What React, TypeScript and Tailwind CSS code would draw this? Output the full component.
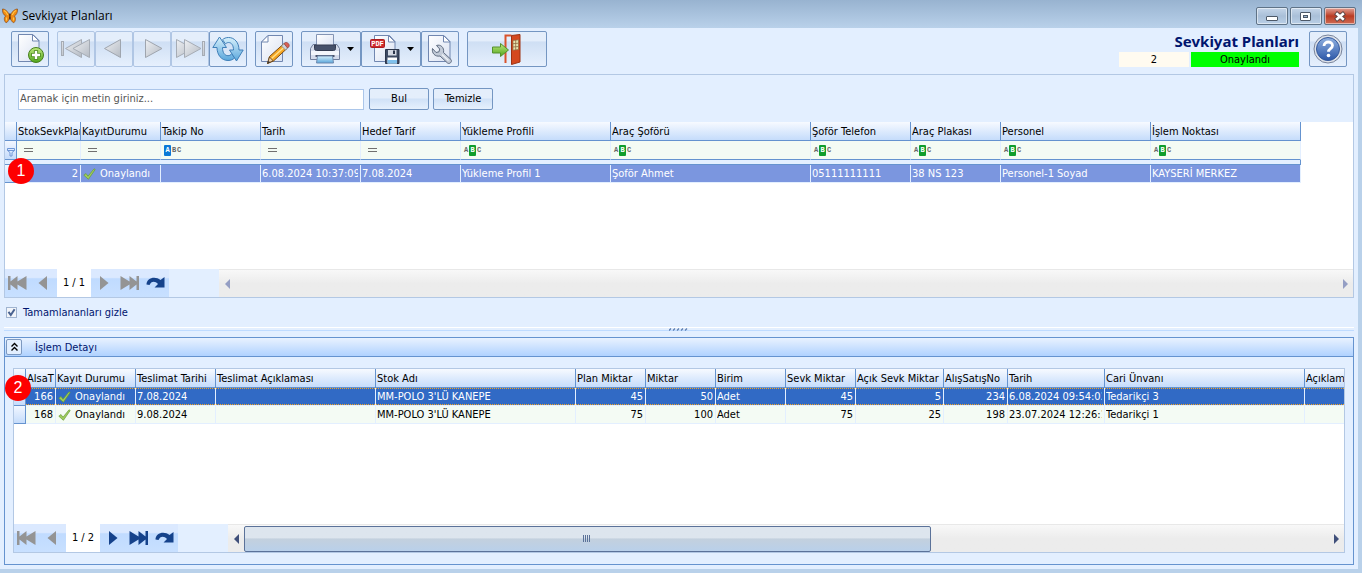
import type { ReactNode } from "react";

type Column = { title: string; width: string; filter?: "eq" | "starts" | "contains"; align?: "right" };

const planColumns: Column[] = [
  { title: "StokSevkPlanID", width: "w-16", filter: "eq", align: "right" },
  { title: "KayıtDurumu", width: "w-20", filter: "eq" },
  { title: "Takip No", width: "w-[100px]", filter: "starts" },
  { title: "Tarih", width: "w-[100px]", filter: "eq" },
  { title: "Hedef Tarif", width: "w-[100px]", filter: "eq" },
  { title: "Yükleme Profili", width: "w-[150px]", filter: "contains" },
  { title: "Araç Şoförü", width: "w-[200px]", filter: "contains" },
  { title: "Şoför Telefon", width: "w-[100px]", filter: "contains" },
  { title: "Araç Plakası", width: "w-[90px]", filter: "contains" },
  { title: "Personel", width: "w-[150px]", filter: "contains" },
  { title: "İşlem Noktası", width: "w-[150px]", filter: "contains" },
];

const planRow = [
  "2",
  "Onaylandı",
  "",
  "6.08.2024 10:37:09",
  "7.08.2024",
  "Yükleme Profil 1",
  "Şoför Ahmet",
  "05111111111",
  "38 NS 123",
  "Personel-1 Soyad",
  "KAYSERİ MERKEZ",
];

const detailColumns: Column[] = [
  { title: "AlsaT", width: "w-[30px]", align: "right" },
  { title: "Kayıt Durumu", width: "w-20" },
  { title: "Teslimat Tarihi", width: "w-20" },
  { title: "Teslimat Açıklaması", width: "w-40" },
  { title: "Stok Adı", width: "w-[200px]" },
  { title: "Plan Miktar", width: "w-[70px]", align: "right" },
  { title: "Miktar", width: "w-[70px]", align: "right" },
  { title: "Birim", width: "w-[70px]" },
  { title: "Sevk Miktar", width: "w-[70px]", align: "right" },
  { title: "Açık Sevk Miktar", width: "w-[88px]", align: "right" },
  { title: "AlışSatışNo", width: "w-16", align: "right" },
  { title: "Tarih", width: "w-[97px]" },
  { title: "Cari Ünvanı", width: "w-[200px]" },
  { title: "Açıklama", width: "w-[100px]" },
];

const detailRows = [
  ["166", "Onaylandı", "7.08.2024", "", "MM-POLO 3'LÜ KANEPE", "45", "50", "Adet", "45", "5", "234", "6.08.2024 09:54:02", "Tedarikçi 3", ""],
  ["168", "Onaylandı", "9.08.2024", "", "MM-POLO 3'LÜ KANEPE", "75", "100", "Adet", "75", "25", "198", "23.07.2024 12:26:10", "Tedarikçi 1", ""],
];

export default function App() {
  return (
    <div className="relative flex min-h-screen flex-col bg-[#b9d1ea] pr-1 pb-1 font-['DejaVu_Sans_Condensed','Noto_Sans',sans-serif] text-[11px] leading-4 text-black">
      <TitleBar />

      <div className="flex flex-1 flex-col bg-[#e3efff] pr-1 pb-1 pl-1">
        <Toolbar />

        {/* Plans */}
        <section className="flex flex-col border border-[#b3c8e4]">
          <form className="flex items-center gap-1 pt-[13px] pb-3 pl-[13px]" onSubmit={(e) => e.preventDefault()}>
            <input
              type="text"
              aria-label="Arama"
              placeholder="Aramak için metin giriniz..."
              className="mr-px h-[21px] w-[346px] border border-[#abc6ea] bg-white px-px pb-px placeholder:text-[#555]"
            />
            <TextButton>Bul</TextButton>
            <TextButton>Temizle</TextButton>
          </form>
          <div className="h-[147px] overflow-hidden bg-white">
            <PlanTable />
          </div>
          <Navigator position="1 / 1" />
        </section>

        <label className="flex h-[29px] items-center gap-1.5 pl-0.5 text-[#00156e]">
          <input
            type="checkbox"
            defaultChecked
            className="size-[11px] appearance-none border border-[#a0b4d0] bg-[#f2f5fa] bg-[url('data:image/svg+xml,%3Csvg%20xmlns=%22http://www.w3.org/2000/svg%22%20viewBox=%220%200%209%209%22%3E%3Cpath%20d=%22M1.5%203.8L3.8%207L7.6%201.2%22%20fill=%22none%22%20stroke=%22%234a6391%22%20stroke-width=%222%22/%3E%3C/svg%3E')]"
          />
          Tamamlananları gizle
        </label>

        {/* Splitter */}
        <div className="mb-1.5 flex h-1 justify-center border-t border-b border-t-white border-b-[#bfdbff]">
          <svg width="20" height="3" viewBox="0 0 20 3">
            {[0, 4, 8, 12, 16].map((x) => (
              <path key={x} d={`M${x} 2.5L${x + 2} 0.5`} stroke="#5b7cb0" strokeWidth="1.3" />
            ))}
          </svg>
        </div>

        {/* Plan details */}
        <section className="flex flex-1 flex-col border border-[#6593cf]">
          <header className="flex h-[19px] shrink-0 items-center gap-[13px] border-b border-[#6593cf] bg-linear-to-b from-[#e9f2ff] to-[#b0d2ff] pl-px text-[#00156e]">
            <button
              type="button"
              aria-label="Daralt"
              className="grid size-4 place-items-center rounded-xs border border-[#7d99c0] bg-[#e3efff]"
            >
              <svg width="9" height="10" viewBox="0 0 9 10" fill="none" stroke="#000" strokeWidth="1.4">
                <path d="M1.5 4.5L4.5 1.5L7.5 4.5M1.5 8.5L4.5 5.5L7.5 8.5" />
              </svg>
            </button>
            <h2 className="pt-px">İşlem Detayı</h2>
          </header>
          <div className="mx-2 mt-[11px] mb-[11px] flex flex-1 flex-col border border-[#b3c8e4] bg-white">
            <div className="grid flex-1 grid-cols-1 content-start overflow-hidden">
              <DetailTable />
            </div>
            <Navigator position="1 / 2" active />
          </div>
        </section>
      </div>

      {/* Step markers */}
      <Marker number={1} className="top-[158px] left-2" />
      <Marker number={2} className="top-[375px] left-[5px]" />
    </div>
  );
}

function Marker({ number, className }: { number: number; className: string }) {
  return (
    <span
      className={`absolute grid size-[26px] place-items-center rounded-full bg-[#fe0000] font-['Liberation_Sans',sans-serif] text-base leading-none text-white ${className}`}
    >
      {number}
    </span>
  );
}

function TitleBar() {
  return (
    <header className="-mr-1 flex h-7 items-center gap-1 bg-linear-to-b from-[#98b3d0] to-[#b9d1ea] pr-1.5 pl-0.5">
      <svg width="16" height="16" viewBox="0 0 16 16" className="mt-1">
        <path d="M7.5 7C6 3.5 3 .8.4 1c-.3 3 1 6 3.2 7C1.8 9 1.8 13 4 14.8 6 14.5 7 11.5 7.8 9 8.6 11.5 10 14.5 11.8 14.8 14 13 14 9.5 12.3 8c2.3-1 3.5-4 3.300-7C13 .8 10 3.5 8.3 7z" fill="#f08a14" stroke="#6a3309" strokeWidth=".5" />
        <path d="M2 2.5c1.5.5 3 2.5 3.8 4.5M14 2.5c-1.5.5-3 2.5-3.8 4.5M4.5 9.5v3M11.5 9.5v3" stroke="#ffc94a" strokeWidth="1.1" fill="none" />
        <path d="M7.9 5.5v6" stroke="#3d2008" strokeWidth="1.2" />
      </svg>
      <h1 className="mt-1 flex-1 font-['Open_Sans',sans-serif] text-xs">Sevkiyat Planları</h1>
      <div className="mt-1 flex gap-0.5">
        <WindowButton label="Simge durumuna küçült" className="from-[#c5d6e9] via-[#a9bfd8] to-[#b9cfe6]">
          <rect x="4.5" y="6.5" width="11" height="4" rx=".5" fill="#fff" stroke="#4d5968" />
        </WindowButton>
        <WindowButton label="Ekranı kapla" className="from-[#c5d6e9] via-[#a9bfd8] to-[#b9cfe6]">
          <rect x="4.5" y="2.5" width="10" height="8" rx=".5" fill="#fff" stroke="#4d5968" />
          <rect x="7.5" y="5.5" width="4" height="2" fill="#9db5cf" stroke="#4d5968" />
        </WindowButton>
        <WindowButton label="Kapat" className="from-[#e0a196] via-[#b93a22] to-[#cf6a52]">
          <path d="M5.5 2.8L14.5 10.2M14.5 2.8L5.5 10.2" stroke="#5b4444" strokeWidth="4.4" />
          <path d="M6.2 3.3L13.8 9.7M13.8 3.3L6.2 9.7" stroke="#fff" strokeWidth="2.6" />
        </WindowButton>
      </div>
    </header>
  );
}

function WindowButton({ label, className, children }: { label: string; className: string; children: ReactNode }) {
  return (
    <button
      type="button"
      aria-label={label}
      className={`grid h-[18px] w-8 place-items-center rounded-xs border border-[#5f7387] bg-linear-to-b inset-ring inset-ring-white/50 ${className}`}
    >
      <svg width="20" height="13" viewBox="0 0 20 13">
        {children}
      </svg>
    </button>
  );
}

function TextButton({ children }: { children: ReactNode }) {
  return (
    <button
      type="submit"
      className="h-[22px] w-[60px] rounded-xs border border-[#7496c2] bg-linear-to-b from-[#e4eefb] from-45% via-[#d0e1f7] via-50% to-[#e6f0fd]"
    >
      {children}
    </button>
  );
}

function ToolButton({
  label,
  wide,
  disabled,
  className = "w-[38px]",
  children,
}: {
  label: string;
  wide?: boolean;
  disabled?: boolean;
  className?: string;
  children: ReactNode;
}) {
  return (
    <button
      type="button"
      aria-label={label}
      disabled={disabled}
      className={`flex h-9 items-center justify-center rounded-xs border border-[#7496c2] bg-linear-to-b from-[#e4eefb] from-25% via-[#cfdff4] via-30% to-[#e6f0fd] disabled:border-[#b0c6e4] ${className}`}
    >
      <svg width="32" height="32" viewBox="0 0 32 32">
        {children}
      </svg>
      {wide && (
        <svg width="7" height="4" viewBox="0 0 7 4" className="ml-1.5">
          <path d="M0 0h7L3.5 4z" />
        </svg>
      )}
    </button>
  );
}

function Toolbar() {
  return (
    <div className="flex h-[46px] items-start gap-2 pt-[3px] pl-[7px]">
      {/* Gradients shared by the icons */}
      <svg width="0" height="0" className="absolute">
        <defs>
          <linearGradient id="paper" x1="0" y1="0" x2="1" y2="1">
            <stop offset="0" stopColor="#fff" />
            <stop offset="1" stopColor="#d9e1f2" />
          </linearGradient>
          <linearGradient id="silver" x1="0" y1="0" x2="1" y2="1">
            <stop offset="0" stopColor="#eef0f3" />
            <stop offset="1" stopColor="#b4bac3" />
          </linearGradient>
          <linearGradient id="sky" x1="0" y1="0" x2="0" y2="1">
            <stop offset="0" stopColor="#d7f0fb" />
            <stop offset="1" stopColor="#5aa7dc" />
          </linearGradient>
          <linearGradient id="leaf" x1="0" y1="0" x2="0" y2="1">
            <stop offset="0" stopColor="#bfe87d" />
            <stop offset="1" stopColor="#4fa51b" />
          </linearGradient>
          <linearGradient id="ball" x1="0" y1="0" x2="0" y2="1">
            <stop offset="0" stopColor="#8fb0e0" />
            <stop offset="1" stopColor="#2c57a8" />
          </linearGradient>
        </defs>
      </svg>

      <ToolButton label="Yeni">
        <path d="M4.5 1.5h14.5l6 6V28.5H4.5z" fill="url(#paper)" stroke="#7187b0" />
        <path d="M18.5 1.5v6.5h6.5z" fill="#fff" stroke="#7187b0" />
        <circle cx="22" cy="22" r="7.5" fill="url(#leaf)" stroke="#47801c" />
        <path d="M22 17.2v9.6M17.2 22h9.6" stroke="#4d8a1f" strokeWidth="4.2" />
        <path d="M22 18v8M18 22h8" stroke="#fff" strokeWidth="2.4" />
      </ToolButton>

      <div className="flex">
        <ToolButton label="İlk" disabled>
          <g fill="url(#silver)" stroke="#a6acb5">
            <rect x="1.5" y="8.5" width="2" height="14" />
            <path d="M21.5 6.5v18L5.5 15.5z" />
            <path d="M29.5 6.5v18L13 15.5z" />
          </g>
        </ToolButton>
        <ToolButton label="Önceki" disabled>
          <path d="M22.5 6.5v18L6.5 15.5z" fill="url(#silver)" stroke="#9fa5ae" />
        </ToolButton>
        <ToolButton label="Sonraki" disabled>
          <path d="M9.5 6.5v18L26 15.5z" fill="url(#silver)" stroke="#9fa5ae" />
        </ToolButton>
        <ToolButton label="Son" disabled>
          <g fill="url(#silver)" stroke="#a6acb5">
            <path d="M2.5 6.5v18L19 15.5z" />
            <path d="M10.5 6.5v18L27 15.5z" />
            <rect x="28.5" y="8.5" width="2" height="14" />
          </g>
        </ToolButton>
        <ToolButton label="Yenile">
          <g fill="url(#sky)" stroke="#3f7fb8" strokeLinejoin="round">
            <path d="M7.5 4L.8 14.5H5C5 22 9.5 27.5 16 27.5c3 0 5-1 6.8-2.8l-3-4C18.8 22 17.5 22.7 16 22.7c-3.2 0-5.5-3-5.5-8.2h4z" />
            <path d="M24.5 28L31.2 17H27C27 9.5 22.5 4.5 16.5 4.5c-2.5 0-4.5.8-6 2.2l3 4.3c1-1 1.8-1.5 3-1.5 3 0 5 2.8 5 7.5h-4z" />
          </g>
        </ToolButton>
      </div>

      <ToolButton label="Düzenle">
        <path d="M10 2.500h14.500V28.5H3.5V9z" fill="url(#paper)" stroke="#7187b0" />
        <path d="M10 2.5V9H3.5z" fill="#fff" stroke="#7187b0" />
        <path d="M9.5 30.5l2-7L25.5 11l4 4L15.5 28z" fill="#f6a623" stroke="#7a4a12" />
        <path d="M13.5 25.5L27.5 13" stroke="#ffe08a" strokeWidth="1.5" />
        <path d="M23.5 13l2.5-2.5 4 4-2.5 2.5z" fill="#cdd2da" stroke="#7c7f88" strokeWidth=".7" />
        <path d="M26 10.5l1.5-1c2-.5 4.5 2 3.5 4l-1.5 1.5z" fill="#d96055" stroke="#8d3d35" strokeWidth=".7" />
        <path d="M9.5 30.5l2-6.5 3.5 3.7z" fill="#f1d0a4" stroke="#4b3015" strokeWidth=".7" />
        <path d="M9.5 30.5l1-2.8 1.7 1.5z" fill="#333" />
      </ToolButton>

      <div className="flex">
        <ToolButton label="Yazdır" wide className="w-[60px]">
          <path d="M7.5 1.5h17V14h-17z" fill="url(#paper)" stroke="#8394b4" />
          <path d="M4 11.5h3v3h18v-3h3l2.5 4V26.5H1.5V15.5z" fill="#d5dceb" stroke="#717f9c" />
          <path d="M5.5 12h21v3.5c0 1.5-1 2-2 2h-17c-1 0-2-.5-2-2z" fill="#46516a" stroke="#343d52" />
          <path d="M2 18h28v4H2z" fill="#f3f6fb" />
          <path d="M6.5 22h19v2h-19z" fill="#4c556b" />
          <path d="M8.5 23h15l1 7h-17z" fill="url(#sky)" stroke="#6e89ae" />
        </ToolButton>
        <ToolButton label="PDF kaydet" wide className="w-[60px]">
          <path d="M5.5 2.5h15l5.5 6V28.5H5.5z" fill="url(#paper)" stroke="#7187b0" />
          <path d="M19.5 2.5v6.5H26z" fill="#fff" stroke="#7187b0" />
          <rect x="1.5" y="6.5" width="14" height="8" rx="1" fill="#cf2a2c" stroke="#a91d20" />
          <text x="8.5" y="13.2" textAnchor="middle" fill="#fff" fontSize="7" fontWeight="700" fontFamily="Liberation Mono, monospace">
            PDF
          </text>
          <path d="M16.5 16.5h13.500V30.5H16.5z" fill="#3d4961" stroke="#2b354a" />
          <path d="M19 17h8.500v5.500H19z" fill="#d3d8e2" />
          <path d="M24 17.5h2v3.500h-2z" fill="#2b354a" />
          <path d="M18.5 24.5h9.500v6h-9.500z" fill="#fff" />
          <path d="M18.5 27h9.500v3.500h-9.500z" fill="#7fc0ec" />
        </ToolButton>
        <ToolButton label="Ayarlar">
          <path d="M4.5 2.5h15.500l6 6V28.5H4.5z" fill="url(#paper)" stroke="#7187b0" />
          <path d="M19.5 2.5v6.500h6.500z" fill="#fff" stroke="#7187b0" />
          <path d="M8.5 15.5c-1 4.500 2.500 8.500 7.500 7.500l7.500 7c2 1.500 5-1 3.500-3.500l-7.500-7C20.5 14.500 16.5 11 12.5 12.500l3.200 3.500-.7 2.800-3 .7z" fill="#c3cbd8" stroke="#5f6b80" />
          <path d="M18 21.5l6.500 6" stroke="#eef1f6" strokeWidth="1.3" />
        </ToolButton>
      </div>

      <ToolButton label="Çıkış" className="w-20">
        <path d="M14.5 30V2.5h6" fill="none" stroke="#d9532c" strokeWidth="2" />
        <path d="M20.5 2.5l8.5-1v27.5l-8.5 2.5z" fill="#d4481f" stroke="#9e3212" />
        <path d="M22 7.5l5.5-.7v9.7l-5.5.7z" fill="#e8e4b0" stroke="#8f6a42" strokeWidth=".7" />
        <path d="M24.7 7v10M22 10.7l5.5-.5M22 14l5.5-.5" stroke="#8f6a42" strokeWidth=".8" />
        <path d="M1.5 14h8V10.5l8 6.5-8 6.5V20h-8z" fill="url(#leaf)" stroke="#54902c" />
      </ToolButton>

      <div className="ml-auto flex flex-col items-end">
        <strong className="font-['Noto_Sans',sans-serif] text-[15px] leading-[21px] font-bold text-[#00156e]">
          Sevkiyat Planları
        </strong>
        <div className="flex gap-0.5 text-center leading-[15px]">
          <output className="w-[70px] bg-[#fffbf0]">2</output>
          <output className="w-[108px] bg-[#00ff00]">Onaylandı</output>
        </div>
      </div>
      <ToolButton label="Yardım" className="mr-[7px] ml-0.5 w-[38px]">
        <circle cx="16" cy="16" r="14" fill="#dfe3ea" stroke="#77839b" />
        <circle cx="16" cy="16" r="11.5" fill="url(#ball)" stroke="#355a9c" />
        <path d="M12 13c0-5.5 8.5-5 8.5-.5 0 3-4 3.2-4 6.2" fill="none" stroke="#fff" strokeWidth="2.8" />
        <circle cx="16.5" cy="22.5" r="1.8" fill="#fff" />
      </ToolButton>
    </div>
  );
}

function Check() {
  return (
    <svg width="13" height="12" viewBox="0 0 13 12" className="mr-1 ml-px shrink-0">
      <path d="M.8 7.2L3 5.5l2 2.7L11 .8l1.2.7L5.4 11.3z" fill="#9fce5b" stroke="#679b35" strokeWidth=".7" />
    </svg>
  );
}

function FilterMark({ kind }: { kind: Column["filter"] }) {
  if (kind === "eq") {
    return (
      <svg width="9" height="4" viewBox="0 0 9 4" className="ml-[5px]">
        <path d="M0 .5h9M0 3.5h9" stroke="#707070" />
      </svg>
    );
  }
  const starts = kind === "starts";
  return (
    <span className="ml-px flex font-['Liberation_Mono',monospace] text-[7px] leading-[11px] font-bold text-[#666]">
      <span className={starts ? "w-[7px] rounded-[1px] bg-[#0a78d7] text-center text-white" : "w-[5px]"}>A</span>
      <span className={starts ? "ml-px w-1" : "w-[7px] rounded-[1px] bg-[#0f9d2c] text-center text-white"}>B</span>
      <span className="ml-px w-1">C</span>
    </span>
  );
}

const headCell =
  "h-[19px] overflow-hidden border-r border-b border-[#6593cf] bg-linear-to-b from-[#f7faff] to-[#c5dcfb] p-0 pt-0.5 pl-px text-left font-normal whitespace-nowrap";
const indicatorCell = "border-r border-b border-[#6593cf] bg-linear-to-b from-[#f2f7ff] to-[#c5dcfb] p-0";
const bodyCell = "h-[18px] overflow-hidden border-r border-b border-[#e3efff] p-0 pt-px pr-0.5 pl-px whitespace-nowrap";

// focused row: dotted orange line along its top and bottom
const focusedCell =
  "bg-[#316ac5] [background-image:repeating-linear-gradient(90deg,#f5a623_0_1px,#316ac5_1px_2px),repeating-linear-gradient(90deg,#f5a623_0_1px,#316ac5_1px_2px)] [background-position:top,bottom] bg-no-repeat [background-size:100%_1px]";

function TableHead({ columns }: { columns: Column[] }) {
  return (
    <tr>
      <th className={`${headCell} w-3`} />
      {columns.map((col) => (
        <th key={col.title} scope="col" className={`${headCell} ${col.width}`}>
          {col.title}
        </th>
      ))}
    </tr>
  );
}

function CellText({ index, value, right }: { index: number; value: string; right: boolean }) {
  return (
    <span className={`flex items-center overflow-hidden ${right ? "justify-end" : ""}`}>
      {index === 1 && <Check />}
      {value}
    </span>
  );
}

function PlanTable() {
  return (
    <table className="w-[1296px] table-fixed border-separate border-spacing-0">
      <thead>
        <TableHead columns={planColumns} />
        <tr>
          <td className={indicatorCell}>
            <svg width="8" height="10" viewBox="0 0 8 10" className="mt-1 ml-0.5">
              <path d="M.5 1.5h7v2L5 5.5V9H3V5.5L.5 3.5zM.5 3.5h7" fill="#dceaff" stroke="#6e97d6" />
            </svg>
          </td>
          {planColumns.map((col) => (
            <td key={col.title} className="h-[19px] border-r border-b border-r-[#e3efff] border-b-[#6593cf] bg-[#f4fbf4] p-0 pl-0.5">
              <FilterMark kind={col.filter} />
            </td>
          ))}
        </tr>
        <tr>
          <td colSpan={12} className="h-[5px] border-r border-b border-[#6593cf] bg-[#e3efff] p-0" />
        </tr>
      </thead>
      <tbody>
        <tr className="text-white">
          <td className={indicatorCell} />
          {planColumns.map((col, i) => (
            <td key={col.title} className={`${bodyCell} bg-[#7b96df]`}>
              <CellText index={i} value={planRow[i]} right={col.align === "right"} />
            </td>
          ))}
        </tr>
      </tbody>
    </table>
  );
}

function DetailTable() {
  return (
    <table className="w-[1391px] table-fixed border-separate border-spacing-0">
      <thead>
        <TableHead columns={detailColumns} />
      </thead>
      <tbody>
        {detailRows.map((row, r) => (
          <tr key={row[0]} className={r === 0 ? "text-white" : ""}>
            <td className={indicatorCell} />
            {detailColumns.map((col, i) => (
              <td key={col.title} className={`${bodyCell} ${r === 0 ? focusedCell : "bg-[#f4fbf4]"}`}>
                <CellText index={i} value={row[i]} right={col.align === "right"} />
              </td>
            ))}
          </tr>
        ))}
      </tbody>
    </table>
  );
}

function Navigator({ position, active }: { position: string; active?: boolean }) {
  return (
    <div className="flex h-7 shrink-0 bg-[#e3efff]">
      <NavButton label="İlk kayıt" disabled>
        <path d="M0 1h2.5v5.5L9.500 1v5.5L18.5 1v14L9.5 9.5V15L2.5 9.5V15H0z" />
      </NavButton>
      <NavButton label="Önceki kayıt" disabled>
        <path d="M13 1v14L4.5 8z" />
      </NavButton>
      <span className="grid w-[34px] place-items-center bg-white">{position}</span>
      <NavButton label="Sonraki kayıt" disabled={!active}>
        <path d="M6 1v14L14.5 8z" />
      </NavButton>
      <NavButton label="Son kayıt" disabled={!active}>
        <path d="M.5 1L9.5 6.5V1L16.5 6.5V1H19v14h-2.5V9.5L9.5 15V9.5L.5 15z" />
      </NavButton>
      <NavButton label="Kayıtları yenile">
        <path d="M.5 9.5C.5 3 9 .5 14.5 5L18.5 2V12.5H8.5L12 9C9 5.5 5 6 3.5 10z" />
      </NavButton>

      {/* Horizontal scroll bar */}
      <div className="ml-[50px] flex flex-1 items-center border-t border-[#e8e8e8] bg-linear-to-b from-[#f8f8f8] to-[#ececec] to-50%">
        <ScrollArrow left active={active} />
        <div className="flex h-[26px] flex-1">
          {active && (
            <div className="grid w-19/30 place-items-center rounded-xs border border-[#5b7299] bg-linear-to-b from-[#dde5ee] from-45% via-[#c3d0de] via-50% to-[#b9d0ea]">
              <svg width="8" height="7" viewBox="0 0 8 7">
                <path d="M.5 0v7M2.5 0v7M4.5 0v7M6.5 0v7" stroke="#5b7299" />
              </svg>
            </div>
          )}
        </div>
        <ScrollArrow active={active} />
      </div>
    </div>
  );
}

function NavButton({ label, disabled, children }: { label: string; disabled?: boolean; children: ReactNode }) {
  return (
    <button
      type="button"
      aria-label={label}
      disabled={disabled}
      className="grid w-[26px] place-items-center bg-linear-to-b from-[#dbe9ff] from-30% via-[#c0dbff] via-35% to-[#c8e0ff] text-[#15428b] disabled:text-[#949494]"
    >
      <svg width="20" height="16" viewBox="0 0 20 16" fill="currentColor">
        {children}
      </svg>
    </button>
  );
}

function ScrollArrow({ left, active }: { left?: boolean; active?: boolean }) {
  return (
    <button
      type="button"
      aria-label={left ? "Sola kaydır" : "Sağa kaydır"}
      className={`grid h-full w-4 place-items-center ${active ? "text-[#3f4f7a]" : "text-[#949ec4]"}`}
    >
      <svg width="5" height="10" viewBox="0 0 5 10" fill="currentColor">
        <path d={left ? "M5 0v10L0 5z" : "M0 0v10L5 5z"} />
      </svg>
    </button>
  );
}
